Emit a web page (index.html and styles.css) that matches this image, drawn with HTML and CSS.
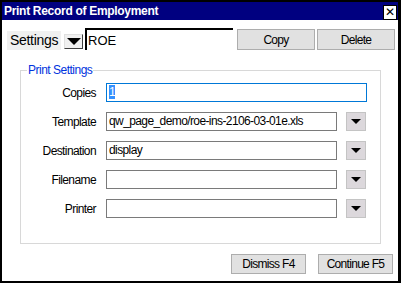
FILE: index.html
```html
<!DOCTYPE html>
<html lang="en">
<head>
  <meta charset="UTF-8" />
  <title>Print Record of Employment</title>
  <link rel="stylesheet" href="styles.css">
</head>
<body>

<div class="window">

  <!-- Title bar -->
  <div class="titlebar">
    <span class="title">Print Record of Employment</span>
    <span class="close">&#x2715;</span>
  </div>

  <!-- Settings row -->
  <div class="settings-row">
    <span class="settings-label">Settings</span>
    <span class="big-drop"><span class="tri"></span></span>
    <input class="settings-input" type="text" value="ROE">
    <button class="btn wide">Copy</button>
    <button class="btn wide">Delete</button>
  </div>

  <!-- Print settings group -->
  <fieldset class="group">
    <legend>Print Settings</legend>

    <div class="row">
      <label>Copies</label>
      <span class="field focus full"><span class="sel">1</span></span>
    </div>
    <div class="row">
      <label>Template</label>
      <span class="field">qw_page_demo/roe-ins-2106-03-01e.xls</span>
      <span class="drop"><span class="tri small"></span></span>
    </div>
    <div class="row">
      <label>Destination</label>
      <span class="field">display</span>
      <span class="drop"><span class="tri small"></span></span>
    </div>
    <div class="row">
      <label>Filename</label>
      <span class="field"></span>
      <span class="drop"><span class="tri small"></span></span>
    </div>
    <div class="row">
      <label>Printer</label>
      <span class="field"></span>
      <span class="drop"><span class="tri small"></span></span>
    </div>
  </fieldset>

  <div class="footer">
    <button class="btn">Dismiss F4</button>
    <button class="btn">Continue F5</button>
  </div>

</div>

</body>
</html>
```

FILE: styles.css
```css
body {
  margin: 0;
  padding: 0;
  background: #fff;
  font-family: 'Liberation Sans', Arial, sans-serif;
  font-size: 12px;
  letter-spacing: -0.6px;
  color: #000;
}

.window {
  width: 401px;
  height: 283px;
  box-sizing: border-box;
  border: 2px solid #000;
  border-right-width: 3px;
  background: #fff;
  overflow: hidden;
}

.titlebar {
  height: 18px;
  background: #000080;
  color: #fff;
  display: flex;
  align-items: center;
  justify-content: space-between;
  padding-left: 2px;
}

.title {
  font-weight: bold;
  font-size: 12px;
  letter-spacing: -0.3px;
}

.close {
  width: 14px;
  height: 15px;
  box-sizing: border-box;
  background: #fff;
  color: #000;
  border: 1px solid #000;
  font-family: 'DejaVu Sans', sans-serif;
  font-size: 12px;
  letter-spacing: 0;
  line-height: 13px;
  text-align: center;
  margin: 2px 1px 0 0;
}

.settings-row {
  display: flex;
  align-items: flex-end;
  height: 22px;
  margin: 8px 0 0 5px;
}

.settings-label {
  background: #f0f0f0;
  font-size: 14px;
  letter-spacing: -0.3px;
  height: 19px;
  line-height: 19px;
  width: 54px;
  box-sizing: border-box;
  padding-left: 3px;
  margin-right: 3px;
  white-space: nowrap;
}

.big-drop {
  width: 19px;
  height: 15px;
  box-sizing: border-box;
  background: #f0f0f0;
  border: 1px solid #e0e0e0;
  border-right-color: #404040;
  border-bottom-color: #404040;
  display: flex;
  align-items: center;
  justify-content: center;
  margin-bottom: 1px;
}

.tri {
  width: 0;
  height: 0;
  border-left: 7px solid transparent;
  border-right: 7px solid transparent;
  border-top: 7px solid #000;
}

.tri.small {
  border-left-width: 5px;
  border-right-width: 5px;
  border-top-width: 5px;
}

.settings-input {
  width: 148px;
  height: 22px;
  box-sizing: border-box;
  border: none;
  border-top: 2px solid #000;
  border-left: 2px solid #000;
  padding: 0 1px;
  margin: 0 2px 0 2px;
  font-family: 'Liberation Sans', Arial, sans-serif;
  font-size: 13px;
  letter-spacing: 0;
  outline: none;
}

.btn {
  background: #e1e1e1;
  border: 1px solid #adadad;
  font-family: 'Liberation Sans', Arial, sans-serif;
  font-size: 12px;
  letter-spacing: -0.7px;
  color: #000;
  height: 20px;
  width: 75px;
  padding: 0;
}

.btn.wide {
  width: 78px;
  height: 21px;
  margin-left: 2px;
}

.group {
  margin: 13px 0 0 18px;
  width: 361px;
  height: 181px;
  box-sizing: border-box;
  border: 1px solid #d8d8d8;
  padding: 6px 0 0 0;
}

.group legend {
  color: #0033dd;
  font-size: 12px;
  letter-spacing: -0.5px;
  padding: 0 1px;
  margin-left: 6px;
}

.row {
  display: flex;
  align-items: center;
  height: 19px;
  margin-bottom: 10px;
}

.row label {
  width: 75px;
  text-align: right;
  margin-right: 10px;
}

.field {
  width: 231px;
  height: 19px;
  box-sizing: border-box;
  border: 1px solid #7a7a7a;
  padding: 0 2px;
  line-height: 17px;
  white-space: nowrap;
  overflow: hidden;
}

.field.full {
  width: 261px;
}

.field.focus {
  border-color: #0078d7;
}

.sel {
  background: #3390ff;
  color: #fff;
}

.drop {
  width: 20px;
  height: 19px;
  box-sizing: border-box;
  margin-left: 9px;
  background: #dcd8dc;
  border: 1px solid #c4c4c4;
  display: flex;
  align-items: center;
  justify-content: center;
}

.footer {
  display: flex;
  justify-content: flex-end;
  gap: 12px;
  margin: 10px 5px 0 0;
}
```
